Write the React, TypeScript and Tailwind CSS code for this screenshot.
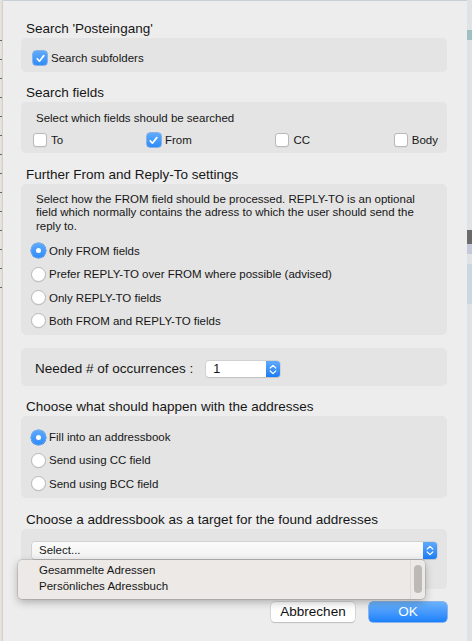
import type { ReactNode } from 'react'

const font = "font-['Liberation_Sans',Arial,sans-serif]"

function CheckBox({ checked, label }: { checked?: boolean; label: string }) {
  return (
    <div className="flex h-[14px] items-center">
      {checked ? (
        <span className="flex h-[14px] w-[14px] items-center justify-center rounded-[3px] bg-gradient-to-b from-[#5eaafc] to-[#2e8cf9] shadow-[0_0_0_0.5px_#2f7fe0]">
          <svg width="11" height="11" viewBox="0 0 11 11">
            <path d="M2.2 5.8 L4.4 8.2 L8.8 2.6" fill="none" stroke="#fff" strokeWidth="1.7" strokeLinecap="round" strokeLinejoin="round" />
          </svg>
        </span>
      ) : (
        <span className="h-[14px] w-[14px] rounded-[3px] border border-[#b9b9b9] bg-white shadow-[0_0.5px_0.5px_rgba(0,0,0,0.08)]" />
      )}
      <span className="ml-[4px] text-[11.5px] leading-[14px] text-[#161616]">{label}</span>
    </div>
  )
}

function Radio({ checked, label }: { checked?: boolean; label: string }) {
  return (
    <div className="flex h-[15px] items-center">
      {checked ? (
        <span className="flex h-[15px] w-[15px] items-center justify-center rounded-full bg-gradient-to-b from-[#5eaafc] to-[#2e8cf9] shadow-[0_0_0_0.5px_#2f7fe0]">
          <span className="h-[5px] w-[5px] rounded-full bg-white" />
        </span>
      ) : (
        <span className="h-[15px] w-[15px] rounded-full border border-[#b9b9b9] bg-white shadow-[0_0.5px_0.5px_rgba(0,0,0,0.08)]" />
      )}
      <span className="ml-[3px] text-[11.5px] leading-[14px] text-[#161616]">{label}</span>
    </div>
  )
}

function Updown() {
  return (
    <svg width="8" height="11" viewBox="0 0 8 11">
      <path d="M1.2 4 L4 1.4 L6.8 4 M1.2 7 L4 9.6 L6.8 7" fill="none" stroke="#fff" strokeWidth="1.2" strokeLinecap="round" strokeLinejoin="round" />
    </svg>
  )
}

function Heading({ children }: { children: ReactNode }) {
  return <h2 className="mb-[1px] h-[16px] pl-[5px] text-[13.5px] leading-[16px] text-[#161616]">{children}</h2>
}

function Group({ className, children }: { className: string; children?: ReactNode }) {
  return <div className={`rounded-[5px] bg-[#e4e4e4] ${className}`}>{children}</div>
}

export default function App() {
  return (
    <div className={`${font} flex h-[641px] w-[472px] overflow-hidden bg-[#dcdfe2]`}>
      {/* strip of the window behind the sheet */}
      <div className="flex w-[3px] flex-col gap-[18px] bg-[#e6e3de] pt-[40px]">
        {Array.from({ length: 14 }, (_, i) => (
          <div key={i} className="h-[1px] w-[2px] bg-[#666]" />
        ))}
      </div>

      {/* sheet */}
      <div className="flex w-[464px] flex-col border-t border-[#c5d0d8] bg-[#ededed] pl-[18px] pr-[20px] pt-[20px] shadow-[0_0_2px_rgba(0,0,0,0.25)]">
        <Heading>Search 'Posteingang'</Heading>
        <Group className="h-[34px] pl-[12px] pt-[13px]">
          <CheckBox checked label="Search subfolders" />
        </Group>

        <div className="mt-[13px]">
          <Heading>Search fields</Heading>
          <Group className="h-[51px] pl-[12px] pr-[9px] pt-[9px]">
            <p className="pl-[3px] text-[11.5px] leading-[14px] text-[#161616]">Select which fields should be searched</p>
            <div className="mt-[8px] flex justify-between">
              <CheckBox label="To" />
              <CheckBox checked label="From" />
              <CheckBox label="CC" />
              <CheckBox label="Body" />
            </div>
          </Group>
        </div>

        <div className="mt-[14px]">
          <Heading>Further From and Reply-To settings</Heading>
          <Group className="h-[151px] pl-[10px] pr-[16px] pt-[9px]">
            <p className="pl-[5px] text-[11.5px] leading-[13.4px] text-[#161616]">
              Select how the FROM field should be processed. REPLY-TO is an optional field which normally contains the adress to which the user should send the reply to.
            </p>
            <div className="mt-[10px] flex flex-col gap-[8.4px]">
              <Radio checked label="Only FROM fields" />
              <Radio label="Prefer REPLY-TO over FROM where possible (advised)" />
              <Radio label="Only REPLY-TO fields" />
              <Radio label="Both FROM and REPLY-TO fields" />
            </div>
          </Group>
        </div>

        <Group className="mt-[13px] flex h-[38px] items-center pl-[14px] pt-[4px]">
          <span className="text-[13.5px] leading-[16px] text-[#161616]">Needed # of occurrences :</span>
          <div className="ml-[13px] flex h-[16px] w-[74px] overflow-hidden rounded-[3px] bg-white shadow-[0_0_0_0.5px_#c2c2c2,0_0.5px_1px_rgba(0,0,0,0.15)]">
            <span className="flex-1 pl-[7px] text-[12.5px] leading-[16px] text-[#111]">1</span>
            <span className="flex w-[14px] items-center justify-center bg-gradient-to-b from-[#5eaafc] to-[#1a7cf5]">
              <Updown />
            </span>
          </div>
        </Group>

        <div className="mt-[13px]">
          <Heading>Choose what should happen with the addresses</Heading>
          <Group className="h-[82px] pl-[10px] pt-[13.5px]">
            <div className="flex flex-col gap-[8.4px]">
              <Radio checked label="Fill into an addressbook" />
              <Radio label="Send using CC field" />
              <Radio label="Send using BCC field" />
            </div>
          </Group>
        </div>

        <div className="mt-[14px]">
          <Heading>Choose a addressbook as a target for the found addresses</Heading>
          <Group className="h-[60px] pl-[11px] pr-[10px] pt-[13px]">
            <div className="relative flex h-[17px] overflow-visible rounded-[3px] bg-gradient-to-b from-[#fbfbfb] to-[#f1f1f1] shadow-[0_0_0_0.5px_#c4c4c4,0_0.5px_1px_rgba(0,0,0,0.15)]">
              <span className="flex-1 pl-[7px] text-[11.5px] leading-[17px] text-[#161616]">Select...</span>
              <span className="flex w-[14px] items-center justify-center rounded-r-[3px] bg-gradient-to-b from-[#5eaafc] to-[#1a7cf5]">
                <Updown />
              </span>

              {/* open popup list */}
              <div className="absolute left-[-14px] top-[18px] flex h-[39px] w-[407px] rounded-[4px] bg-[#ece9e6] shadow-[0_0_0_0.5px_rgba(0,0,0,0.2),0_3px_8px_rgba(0,0,0,0.28)]">
                <div className="flex-1 pl-[21px] pt-[3px]">
                  <div className="text-[11.5px] leading-[15.5px] text-[#161616]">Gesammelte Adressen</div>
                  <div className="text-[11.5px] leading-[15.5px] text-[#161616]">Persönliches Adressbuch</div>
                </div>
                <div className="flex w-[15px] justify-center border-l border-[#dedbd8] pt-[5px]">
                  <div className="h-[28px] w-[8px] rounded-full bg-[#bcb9b6]" />
                </div>
              </div>
            </div>
          </Group>
        </div>

        <div className="mt-[13px] flex justify-end gap-[14px]">
          <button className="h-[20px] w-[84px] rounded-[4px] bg-white text-[13.5px] leading-[20px] text-[#111] shadow-[0_0_0_0.5px_#c2c2c2,0_0.5px_1px_rgba(0,0,0,0.2)]">
            Abbrechen
          </button>
          <button className="h-[20px] w-[78px] rounded-[4px] bg-gradient-to-b from-[#69b1fb] to-[#1b81fb] text-[13.5px] leading-[20px] text-white shadow-[0_0_0_0.5px_#2a7ce8]">
            OK
          </button>
        </div>
      </div>

      {/* strip on the right */}
      <div className="flex w-[5px] flex-col bg-[#dfe3e6]">
        <div className="mt-[30px] h-[10px] bg-[#9fbfc4]" />
        <div className="mt-[190px] h-[14px] bg-[#6b6b6b]" />
        <div className="h-[10px] bg-[#c6c8dc]" />
        <div className="mt-[10px] h-[40px] bg-[#ccd6e0]" />
      </div>
    </div>
  )
}
